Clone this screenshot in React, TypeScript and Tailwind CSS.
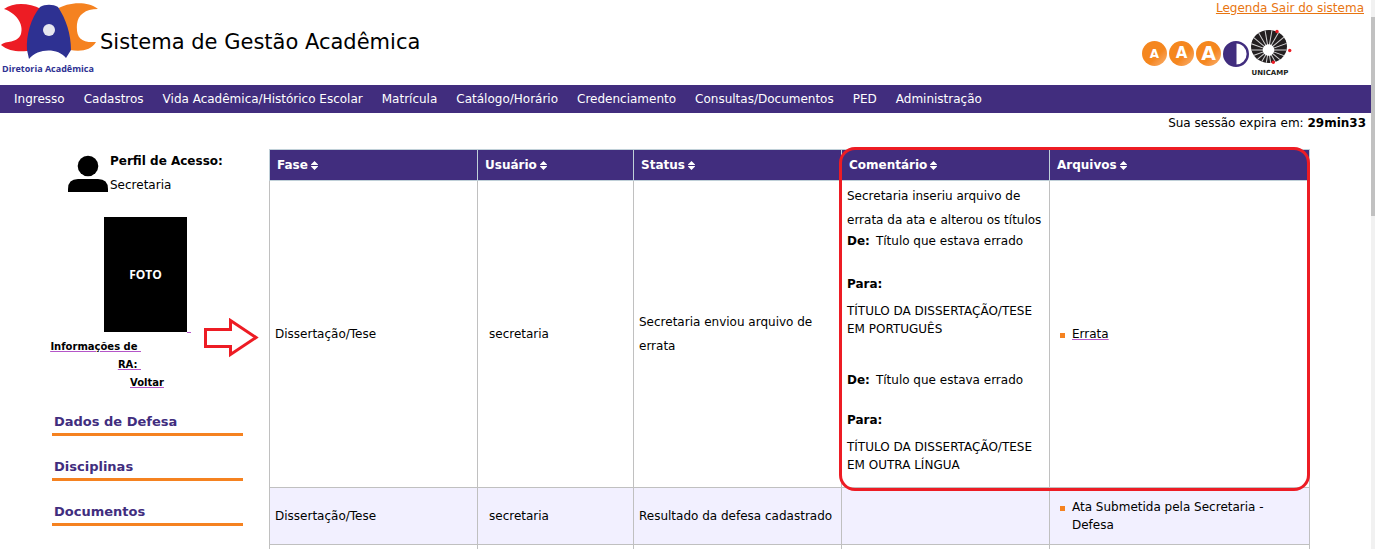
import type { ReactNode } from "react";

const menu = [
  "Ingresso",
  "Cadastros",
  "Vida Acadêmica/Histórico Escolar",
  "Matrícula",
  "Catálogo/Horário",
  "Credenciamento",
  "Consultas/Documentos",
  "PED",
  "Administração",
];

const columns = [
  { label: "Fase", width: "w-[20%]" },
  { label: "Usuário", width: "w-[15%]" },
  { label: "Status", width: "w-[20%]" },
  { label: "Comentário", width: "w-[20%]" },
  { label: "Arquivos", width: "w-[25%]" },
];

const sections = ["Dados de Defesa", "Disciplinas", "Documentos"];

function DacLogo() {
  return (
    <svg width="98" height="60" viewBox="0 0 98 60" aria-hidden="true">
      <path d="M4 7C14 0 29 1 41 7L34 48L27 49C18 50 8 49 1 43C6 38 17 42 21 32C24 22 16 11 4 7Z" fill="#ed1c24" />
      <path d="M57 7C67 1 86 -2 98 7C85 7 78 13 77 22C76 35 80 41 96 40C91 48 82 50 70 48Z" fill="#f58220" />
      <path d="M40 5C45 2 53 2 58 5C66 17 71 32 71 48L66 56C58 46 38 46 29 57L27 48C26 33 31 16 40 5Z" fill="#2e3192" />
      <circle cx="49" cy="28" r="6" fill="#e6e7f0" />
    </svg>
  );
}

function UnicampLogo() {
  const rays = Array.from({ length: 18 }, (_, i) => 10 + i * 20);
  return (
    <svg width="42" height="48" viewBox="0 0 42 48" aria-label="Unicamp" role="img">
      <clipPath id="petals">
        <ellipse cx="18" cy="18.500" rx="18" ry="16.500" />
      </clipPath>
      <g clipPath="url(#petals)">
        <rect width="42" height="40" fill="#231f20" />
        {rays.map((angle) => (
          <path key={angle} d="M17.500 18V-2" stroke="#d4d4d4" strokeWidth="1" transform={`rotate(${angle} 17.500 22)`} />
        ))}
      </g>
      <circle cx="17.500" cy="22" r="5.800" fill="#fff" />
      <g fill="#ed1c24">
        <circle cx="26" cy="3.500" r="1.700" />
        <circle cx="38.700" cy="22.500" r="1.700" />
        <circle cx="22.300" cy="34.300" r="1.700" />
      </g>
      <text x="0.500" y="47" fontSize="7" fontWeight="700" fontFamily="DejaVu Sans, sans-serif" fill="#231f20">
        UNICAMP
      </text>
    </svg>
  );
}

function SortIcon() {
  return (
    <svg width="7" height="9" viewBox="0 0 7 9" className="shrink-0" aria-hidden="true">
      <path d="M3.500 0L7.500 4H-0.500ZM3.500 9L-0.500 5H7.500Z" fill="#fff" />
    </svg>
  );
}

function Cell({ children }: { children?: ReactNode }) {
  return <td className="border border-[#c0c0c0] px-[5px] leading-6">{children}</td>;
}

function FileItem({ children }: { children: ReactNode }) {
  return (
    <li className="flex items-start gap-[7px] pl-[5px] leading-[18px]">
      <span className="mt-2 size-[5px] shrink-0 bg-[#f58220]" />
      <span>{children}</span>
    </li>
  );
}

function SizeButton({ label, size }: { label: string; size: string }) {
  return (
    <button
      type="button"
      aria-label={label}
      className={`flex size-[25px] items-center justify-center rounded-full bg-linear-to-br from-[#f5871f] from-60% to-[#f9b36c] font-bold text-white ${size}`}
    >
      A
    </button>
  );
}

export default function App() {
  return (
    <div className="flex h-screen overflow-hidden bg-white font-['DejaVu_Sans',Verdana,sans-serif] text-[12px] text-black">
      <div className="min-w-0 flex-1">
        <header className="flex h-[85px] justify-between">
          <div className="flex items-start gap-[2px]">
            <a href="#inicio" className="flex flex-col items-start pt-[2px] text-[#2e3192]">
              <DacLogo />
              <span className="pl-[2px] font-['Open_Sans',sans-serif] text-[9px] leading-[14px] font-bold whitespace-nowrap">Diretoria Acadêmica</span>
            </a>
            <h1 className="pt-7 text-[21px] leading-7">Sistema de Gestão Acadêmica</h1>
          </div>
          <div className="flex flex-col items-end pr-[7px]">
            <div className="flex whitespace-pre text-[#e87511] underline leading-4">
              <a href="#legenda">{"Legenda "}</a>
              <a href="#sair">Sair do sistema</a>
            </div>
            <div className="mr-[71px] flex gap-[2px] pt-3">
              <div className="flex gap-[2px] pt-[13px]">
                <SizeButton label="Diminuir texto" size="text-[12px]" />
                <SizeButton label="Texto normal" size="text-[15px]" />
                <SizeButton label="Aumentar texto" size="text-[19px]" />
                <button type="button" aria-label="Alto contraste" className="size-[26px]">
                  <svg width="26" height="26" viewBox="0 0 26 26" aria-hidden="true">
                    <circle cx="13" cy="13" r="11.800" fill="#fff" stroke="#412d7e" strokeWidth="2.400" />
                    <path d="M13.500 1A12 12 0 0 0 13.500 25Z" fill="#412d7e" />
                  </svg>
                </button>
              </div>
              <UnicampLogo />
            </div>
          </div>
        </header>

        <nav className="flex h-7 items-center gap-[19px] bg-[#412d7e] px-[14px] whitespace-nowrap text-white">
          {menu.map((item) => (
            <a key={item} href="#menu">{item}</a>
          ))}
        </nav>

        <p className="pr-[5px] text-right leading-5">
          Sua sessão expira em: <b>29min33</b>
        </p>

        <div className="flex pt-4">
          <aside className="w-[269px] shrink-0">
            <div className="flex gap-[2px] pl-[68px]">
              <svg width="40" height="38" viewBox="0 0 40 38" className="mt-[6px]" aria-hidden="true">
                <circle cx="20" cy="11" r="10.300" />
                <path d="M0 37V34Q0 24 10 24H30Q40 24 40 34V37Z" />
              </svg>
              <div className="leading-6">
                <b>Perfil de Acesso:</b>
                <p>Secretaria</p>
              </div>
            </div>

            <div className="flex pt-5 pl-[104px]">
              <div className="flex h-[115px] w-[83px] items-center justify-center bg-black font-['Open_Sans',sans-serif] text-[12px] font-bold text-white">FOTO</div>
              <span className="mt-[115px] h-px w-1 bg-[#b455c8]" />
            </div>
            <div className="flex w-[141px] flex-col items-end pt-[5px] text-[10px] leading-[18px] font-bold underline decoration-[#b455c8]">
              <a href="#ra" className="text-right whitespace-pre">{"Informações de \nRA: "}</a>
            </div>
            <a href="#voltar" className="ml-[130px] block w-fit text-[10px] leading-[18px] font-bold underline decoration-[#b455c8]">Voltar</a>

            <div className="ml-[52px] flex w-[191px] flex-col gap-5 pt-[19px]">
              {sections.map((section) => (
                <a key={section} href="#secao" className="border-b-[3px] border-[#f58220] pl-[2px] text-[13px] leading-[22px] font-bold text-[#412d7e]">
                  {section}
                </a>
              ))}
            </div>
          </aside>

          <div className="relative mr-[61px] flex-1">
            <table className="w-full table-fixed border-collapse">
              <thead>
                <tr className="h-[31px] bg-[#412d7e] text-white">
                  {columns.map(({ label, width }) => (
                    <th key={label} scope="col" className={`border border-[#c0d0d8] px-[7px] text-left font-bold ${width}`}>
                      <span className="flex items-center gap-[3px]">
                        {label}
                        <SortIcon />
                      </span>
                    </th>
                  ))}
                </tr>
              </thead>
              <tbody>
                <tr>
                  <Cell>Dissertação/Tese</Cell>
                  <Cell><span className="pl-[6px]">secretaria</span></Cell>
                  <Cell>Secretaria enviou arquivo de errata</Cell>
                  <Cell>
                    <div className="pt-[3px] pb-[13px] leading-[18px]">
                      <p className="leading-6">Secretaria inseriu arquivo de errata da ata e alterou os títulos</p>
                      <p className="flex gap-[6px]"><b>De:</b> Título que estava errado</p>
                      <p className="mt-[25px] font-bold">Para:</p>
                      <p className="mt-[9px]">TÍTULO DA DISSERTAÇÃO/TESE EM PORTUGUÊS</p>
                      <p className="mt-[33px] flex gap-[6px]"><b>De:</b> Título que estava errado</p>
                      <p className="mt-[22px] font-bold">Para:</p>
                      <p className="mt-[9px]">TÍTULO DA DISSERTAÇÃO/TESE EM OUTRA LÍNGUA</p>
                    </div>
                  </Cell>
                  <Cell>
                    <ul>
                      <FileItem><a href="#errata" className="underline decoration-[#b455c8]">Errata</a></FileItem>
                    </ul>
                  </Cell>
                </tr>
                <tr className="h-[57px] bg-[#f2f0ff]">
                  <Cell>Dissertação/Tese</Cell>
                  <Cell><span className="pl-[6px]">secretaria</span></Cell>
                  <Cell>Resultado da defesa cadastrado</Cell>
                  <Cell />
                  <Cell>
                    <ul>
                      <FileItem>Ata Submetida pela Secretaria - Defesa</FileItem>
                    </ul>
                  </Cell>
                </tr>
                <tr className="h-[57px]">
                  <Cell />
                  <Cell />
                  <Cell />
                  <Cell />
                  <Cell />
                </tr>
              </tbody>
            </table>
            <div className="pointer-events-none absolute -top-[2px] right-0 left-[55%] -ml-[3px] h-[344px] rounded-[16px] border-[3px] border-[#ed1c24]" />
            <svg width="56" height="40" viewBox="0 0 56 40" className="absolute top-[169px] -left-[66px]" aria-hidden="true">
              <path d="M2.500 11.500H27.500V2.500L53 19.500L27.500 36.500V28.500H2.500Z" fill="none" stroke="#ed1c24" strokeWidth="3" />
            </svg>
          </div>
        </div>
      </div>
      <div className="w-1 shrink-0 bg-[#f1f1f1] pt-[17px]">
        <div className="h-[199px] bg-[#c1c1c1]" />
      </div>
    </div>
  );
}
